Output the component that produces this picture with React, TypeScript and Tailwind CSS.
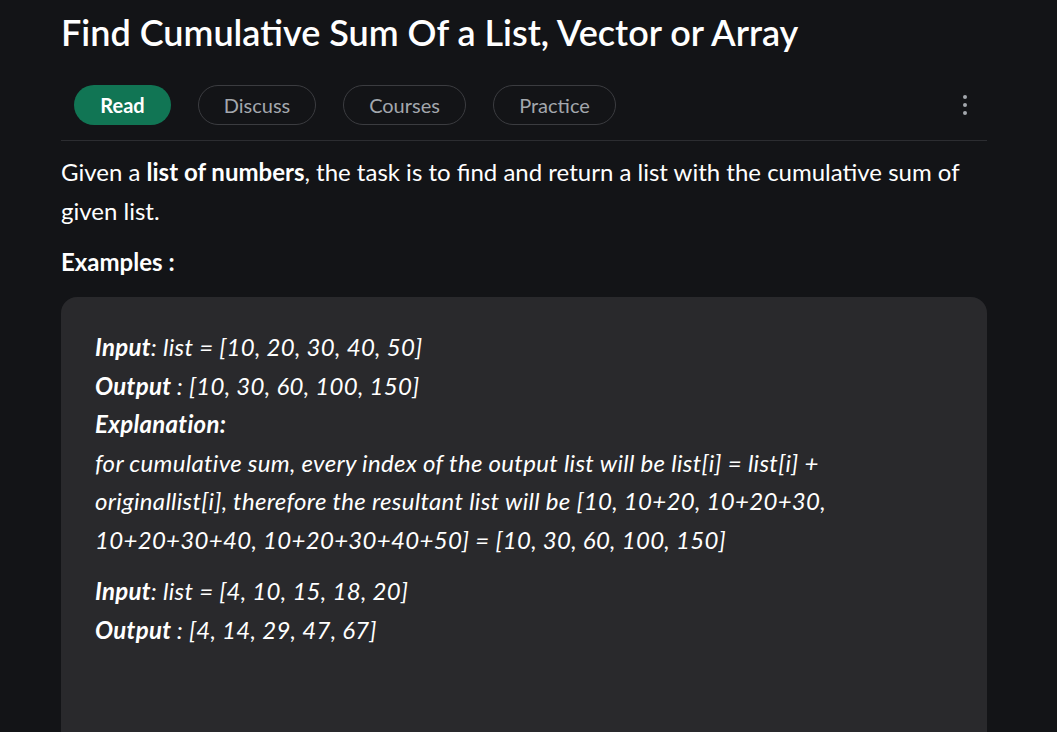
import React from 'react';

const tabs = [
  { label: 'Discuss', w: 'w-[118px]' },
  { label: 'Courses', w: 'w-[123px]' },
  { label: 'Practice', w: 'w-[123px]' },
];

export default function App() {
  return (
    <div className="h-[732px] w-[1057px] bg-[#131417] pl-[61px] overflow-hidden [font-family:Lato,'Noto_Sans',sans-serif]">
      <div className="w-[926px]">
        <h1 className="pt-[10px] text-[36px] leading-[44px] font-semibold text-white">
          Find Cumulative Sum Of a List, Vector or Array
        </h1>

        <div className="mt-[31px] flex items-center h-[40px] pl-[13px] pr-[20px] gap-[27px]">
          <button className="h-[40px] w-[97px] rounded-full bg-[#117554] text-[20px] font-bold text-white">
            Read
          </button>
          {tabs.map(t => (
            <button
              key={t.label}
              className={`h-[40px] ${t.w} rounded-full border border-[#3b3c40] text-[20px] text-[#a3a7ad]`}
            >
              {t.label}
            </button>
          ))}
          <div className="ml-auto flex flex-col items-center gap-[4px]">
            <span className="w-[4px] h-[4px] rounded-full bg-[#a3a7ad]" />
            <span className="w-[4px] h-[4px] rounded-full bg-[#a3a7ad]" />
            <span className="w-[4px] h-[4px] rounded-full bg-[#a3a7ad]" />
          </div>
        </div>

        <div className="mt-[15px] h-px bg-[#2c2d31]" />

        <div className="text-white text-[24px]">
          <p className="mt-[11px] leading-[39px]">
            Given a <b>list of numbers</b>, the task is to find and return a list with the cumulative sum of given list.
          </p>
          <p className="mt-[12px] leading-[39px] font-bold">Examples :</p>

          <div className="mt-[16px] rounded-t-[16px] bg-[#29292c] pt-[31px] pl-[34px] pr-[46px] pb-[100px] italic leading-[38.5px] tracking-[0.3px]">
            <p>
              <b>Input</b>: list = [10, 20, 30, 40, 50]
              <br />
              <b>Output </b>: [10, 30, 60, 100, 150]
              <br />
              <b>Explanation:</b>
              <br />
              for cumulative sum, every index of the output list will be list[i] = list[i] + originallist[i], therefore the resultant list will be [10, 10+20, 10+20+30, 10+20+30+40, 10+20+30+40+50] = [10, 30, 60, 100, 150]
            </p>
            <p className="mt-[13px]">
              <b>Input</b>: list = [4, 10, 15, 18, 20]
              <br />
              <b>Output </b>: [4, 14, 29, 47, 67]
            </p>
          </div>
        </div>
      </div>
    </div>
  );
}
